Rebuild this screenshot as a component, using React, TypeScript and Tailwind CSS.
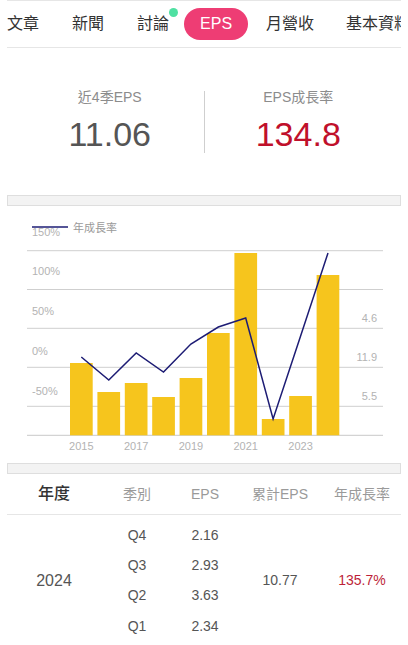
import React from "react";

const bars = [157, 186, 177, 191, 172, 127, 47, 213, 190, 69];
const lineY = [151, 174, 147, 166, 138, 121, 112, 213, 130, 47];
const pitch = 27.4;
const bx = (i: number) => 70 + pitch * i;
const cx = (i: number) => 70 + pitch * i + 11.35;

function Chart() {
  const grid = [44.7, 83.5, 122.3, 161.3, 200.3];
  const left = [
    ["150%", 26],
    ["100%", 65],
    ["50%", 105],
    ["0%", 145],
    ["-50%", 185],
  ] as const;
  const right = [
    ["4.6", 112],
    ["11.9", 151],
    ["5.5", 190],
  ] as const;
  const pts = lineY.map((y, i) => `${cx(i).toFixed(1)},${y}`).join(" ");
  return (
    <svg width={408} height={257} viewBox="0 0 408 257" className="block">
      {grid.map((y) => (
        <line key={y} x1={27} x2={383} y1={y} y2={y} stroke="#cfcfcf" strokeWidth={1} />
      ))}
      <line x1={27} x2={383} y1={229.3} y2={229.3} stroke="#c8c8c8" strokeWidth={1} />
      {left.map(([t, y]) => (
        <text key={t} x={32} y={y} fontSize={11} fill="#b3b3b3" dominantBaseline="central">
          {t}
        </text>
      ))}
      {right.map(([t, y]) => (
        <text key={t} x={377} y={y} fontSize={11} fill="#b3b3b3" textAnchor="end" dominantBaseline="central">
          {t}
        </text>
      ))}
      {bars.map((t, i) => (
        <rect key={i} x={bx(i)} y={t} width={22.7} height={229.3 - t} fill="#f6c51d" />
      ))}
      <polyline points={pts} fill="none" stroke="#1d1c74" strokeWidth={1.5} strokeLinejoin="miter" />
      {[0, 2, 4, 6, 8].map((i, k) => (
        <text key={i} x={cx(i)} y={240} fontSize={11} fill="#b3b3b3" textAnchor="middle" dominantBaseline="central">
          {2015 + k * 2}
        </text>
      ))}
      <line x1={32} x2={68} y1={21} y2={21} stroke="#1d1c74" strokeWidth={1.5} />
      <text x={73} y={22} fontSize={11} fill="#9a9a9a" dominantBaseline="central">
        年成長率
      </text>
    </svg>
  );
}

function GrayBar() {
  return <div className="mx-[7px] h-[11px] bg-[#f3f3f3] border border-[#dedede]" />;
}

export default function App() {
  const rows = [
    ["Q4", "2.16"],
    ["Q3", "2.93"],
    ["Q2", "3.63"],
    ["Q1", "2.34"],
  ];
  return (
    <div className="w-[408px] h-[645px] overflow-hidden bg-white font-['Liberation_Sans','Noto_Sans_CJK_TC',sans-serif]">
      {/* Tabs */}
      <div className="mx-[7px] h-[48px] border-t border-b border-[#e6e6e6] overflow-hidden">
        <div className="flex items-center h-full whitespace-nowrap text-[16px] leading-[24px] text-[#333]">
          <span>文章</span>
          <span className="ml-[33px]">新聞</span>
          <span className="ml-[33px] relative">
            討論
            <span className="absolute left-[32px] -top-[4.5px] w-[9px] h-[9px] rounded-full bg-[#4fe0a2]" />
          </span>
          <span className="ml-[15px] h-[32px] px-[16px] rounded-full bg-[#ee3d74] text-white flex items-center">EPS</span>
          <span className="ml-[18px]">月營收</span>
          <span className="ml-[32px]">基本資料</span>
        </div>
      </div>

      {/* Stats */}
      <div className="h-[147px] pt-[39px] px-[16px] flex">
        <div className="flex-1 flex flex-col items-center h-[67px]">
          <div className="text-[14px] leading-[20px] text-[#8c8c8c]">近4季EPS</div>
          <div className="mt-[7px] text-[34px] leading-[40px] text-[#555555]">11.06</div>
        </div>
        <div className="w-px h-[62px] mt-[4px] bg-[#cfcfcf]" />
        <div className="flex-1 flex flex-col items-center h-[67px]">
          <div className="text-[14px] leading-[20px] text-[#8c8c8c]">EPS成長率</div>
          <div className="mt-[7px] text-[34px] leading-[40px] text-[#c0102b]">134.8</div>
        </div>
      </div>

      <GrayBar />
      <Chart />
      <GrayBar />

      {/* Table */}
      <div className="mx-[7px]">
        <div className="grid grid-cols-[94px_72px_64px_86px_78px] h-[41px] items-center border-b border-[#e6e6e6] text-[14px] text-[#9a9a9a]">
          <div className="text-center text-[16px] font-medium text-[#333]">年度</div>
          <div className="text-center">季別</div>
          <div className="text-center">EPS</div>
          <div className="text-center">累計EPS</div>
          <div className="text-center">年成長率</div>
        </div>
        <div className="pt-[5px] grid grid-cols-[94px_72px_64px_86px_78px] grid-rows-[repeat(4,30.4px)] text-[14px] text-[#555]">
          <div className="row-span-4 col-start-1 row-start-1 flex items-center justify-center text-[16px]">2024</div>
          {rows.map(([q, v], i) => (
            <React.Fragment key={q}>
              <div className="col-start-2 flex items-center justify-center" style={{ gridRowStart: i + 1 }}>
                {q}
              </div>
              <div className="col-start-3 flex items-center justify-center" style={{ gridRowStart: i + 1 }}>
                {v}
              </div>
            </React.Fragment>
          ))}
          <div className="row-span-4 col-start-4 row-start-1 flex items-center justify-center">10.77</div>
          <div className="row-span-4 col-start-5 row-start-1 flex items-center justify-center text-[#bd1f39]">135.7%</div>
        </div>
      </div>
    </div>
  );
}
